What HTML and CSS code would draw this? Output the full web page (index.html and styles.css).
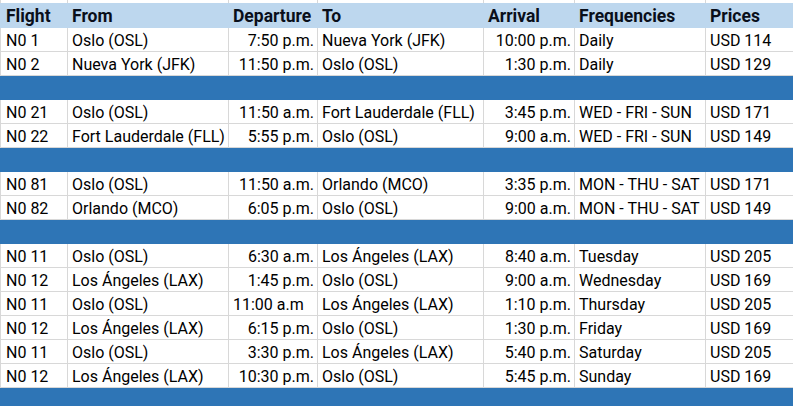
FILE: index.html
```html
<!DOCTYPE html>
<html lang="es">
<head>
<meta charset="utf-8">
<title>Flights</title>
<link rel="stylesheet" href="styles.css">
</head>
<body>
<div class="sheet">
  <div class="row top"><div></div><div></div><div></div><div></div><div></div><div></div><div></div></div>
  <div class="row head">
    <div>Flight</div><div>From</div><div>Departure</div><div>To</div><div>Arrival</div><div>Frequencies</div><div>Prices</div>
  </div>
  <div class="row"><div>N0 1</div><div>Oslo (OSL)</div><div class="r">7:50 p.m.</div><div>Nueva York (JFK)</div><div class="r">10:00 p.m.</div><div>Daily</div><div>USD 114</div></div>
  <div class="row"><div>N0 2</div><div>Nueva York (JFK)</div><div class="r">11:50 p.m.</div><div>Oslo (OSL)</div><div class="r">1:30 p.m.</div><div>Daily</div><div>USD 129</div></div>
  <div class="band"></div>
  <div class="row"><div>N0 21</div><div>Oslo (OSL)</div><div class="r">11:50 a.m.</div><div>Fort Lauderdale (FLL)</div><div class="r">3:45 p.m.</div><div>WED - FRI - SUN</div><div>USD 171</div></div>
  <div class="row"><div>N0 22</div><div>Fort Lauderdale (FLL)</div><div class="r">5:55 p.m.</div><div>Oslo (OSL)</div><div class="r">9:00 a.m.</div><div>WED - FRI - SUN</div><div>USD 149</div></div>
  <div class="band"></div>
  <div class="row"><div>N0 81</div><div>Oslo (OSL)</div><div class="r">11:50 a.m.</div><div>Orlando (MCO)</div><div class="r">3:35 p.m.</div><div>MON - THU - SAT</div><div>USD 171</div></div>
  <div class="row"><div>N0 82</div><div>Orlando (MCO)</div><div class="r">6:05 p.m.</div><div>Oslo (OSL)</div><div class="r">9:00 a.m.</div><div>MON - THU - SAT</div><div>USD 149</div></div>
  <div class="band"></div>
  <div class="row"><div>N0 11</div><div>Oslo (OSL)</div><div class="r">6:30 a.m.</div><div>Los Ángeles (LAX)</div><div class="r">8:40 a.m.</div><div>Tuesday</div><div>USD 205</div></div>
  <div class="row"><div>N0 12</div><div>Los Ángeles (LAX)</div><div class="r">1:45 p.m.</div><div>Oslo (OSL)</div><div class="r">9:00 a.m.</div><div>Wednesday</div><div>USD 169</div></div>
  <div class="row"><div>N0 11</div><div>Oslo (OSL)</div><div>11:00 a.m</div><div>Los Ángeles (LAX)</div><div class="r">1:10 p.m.</div><div>Thursday</div><div>USD 205</div></div>
  <div class="row"><div>N0 12</div><div>Los Ángeles (LAX)</div><div class="r">6:15 p.m.</div><div>Oslo (OSL)</div><div class="r">1:30 p.m.</div><div>Friday</div><div>USD 169</div></div>
  <div class="row"><div>N0 11</div><div>Oslo (OSL)</div><div class="r">3:30 p.m.</div><div>Los Ángeles (LAX)</div><div class="r">5:40 p.m.</div><div>Saturday</div><div>USD 205</div></div>
  <div class="row"><div>N0 12</div><div>Los Ángeles (LAX)</div><div class="r">10:30 p.m.</div><div>Oslo (OSL)</div><div class="r">5:45 p.m.</div><div>Sunday</div><div>USD 169</div></div>
  <div class="band last"></div>
</div>
</body>
</html>
```

FILE: styles.css
```css
html, body {
  margin: 0;
  padding: 0;
  overflow: hidden;
  background: #ffffff;
}

.sheet {
  width: 793px;
  height: 406px;
  font-family: Roboto, Lato, sans-serif;
  font-size: 16px;
  color: #000000;
}

.row {
  display: grid;
  grid-template-columns: 68px 161px 89px 166px 91px 131px 1fr;
  height: 24px;
  box-sizing: border-box;
  border-bottom: 1px solid #d8d8d8;
}

.row > div {
  box-sizing: border-box;
  border-right: 1px solid #d8d8d8;
  padding: 2px 3px 0 4px;
  line-height: 21px;
  white-space: nowrap;
  overflow: visible;
  position: relative;
  z-index: 1;
}

.row > div:first-child {
  border-left: 1px solid #d8d8d8;
  padding-left: 5px;
}

.row > div:last-child {
  border-right: none;
}

.row > .r {
  text-align: right;
}

.row.top {
  height: 3px;
  border-bottom: none;
}

.row.top > div {
  padding: 0;
}

.row.head {
  height: 25px;
  background: #bdd7ee;
  border-bottom: none;
  font-weight: 700;
  font-size: 17.5px;
  color: #0a0f1a;
}

.row.head > div {
  border-color: transparent;
  line-height: 24px;
  padding-top: 1px;
}

.band {
  height: 24px;
  background: #2e75b6;
}

.band.last {
  height: 18px;
}
```
